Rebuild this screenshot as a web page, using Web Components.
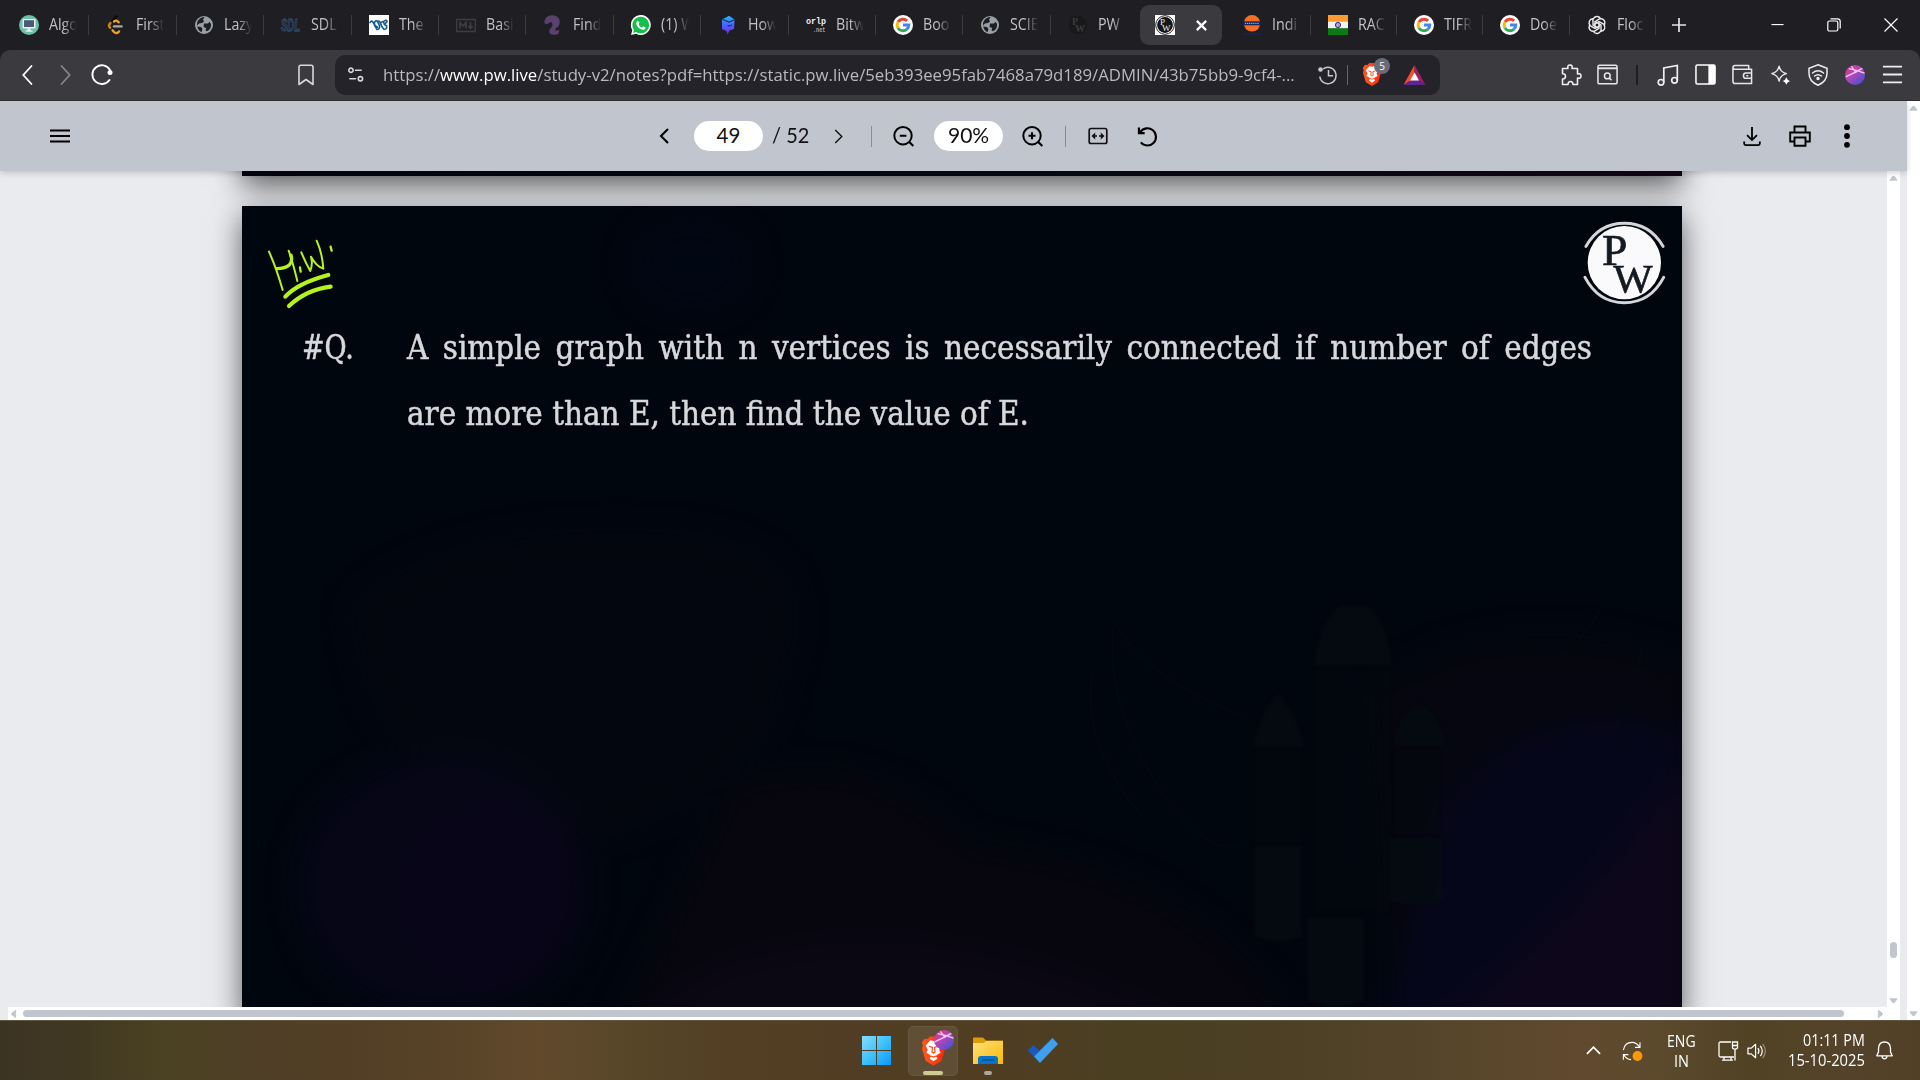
<!DOCTYPE html>
<html lang="en">
<head>
<meta charset="utf-8">
<title>Notes viewer</title>
<style>
html,body{margin:0;width:1920px;height:1080px;overflow:hidden;background:#1f1e23;font-family:"Open Sans","Noto Sans",sans-serif}
</style>
</head>
<body>
<desktop-screen></desktop-screen>
<script>
const G = {
algo:`<svg viewBox="0 0 20 20"><circle cx="10" cy="10" r="10" fill="#6cc0a8"/><rect x="3.5" y="4" width="13" height="9.5" rx="1" fill="#eee"/><rect x="5" y="5.2" width="10" height="6.8" fill="#4a5a78"/><path d="M8.5 13.5h3v2h2v1.2h-7v-1.2h2z" fill="#eee"/></svg>`,
leet:`<svg viewBox="0 0 20 20" fill="none" stroke-linecap="round" stroke-width="2.4"><path d="M10.500 1.500 4 8.300" stroke="#0a0a0a"/><path d="M4.500 7.800Q1.800 10.300 4 12.800" stroke="#c98416"/><path d="M6.500 15.300l1.500 1.700Q10.500 19.500 13 16.500" stroke="#f0a01e"/><path d="M8 6.500Q10.500 4.500 12.700 7.300" stroke="#f0a01e"/><path d="M8 11.400h7.500" stroke="#a9a9a9"/></svg>`,
globe:`<svg viewBox="0 0 20 20"><circle cx="10" cy="10" r="9" fill="#9aa0a6"/><path d="M10.500 2.500 9 4.500 10 6.500 8 8 5 8.500 3 10.500Q2.500 6 6 3.500T10.500 2.500Z" fill="#1f1e23"/><path d="M10 8.500h4l1.500-1.700 1.500 2.200q.6 5-4 7.200l-1.500-.8.700-2.500-2.700-1z" fill="#1f1e23"/><path d="M3.200 11.500 7 12l1.500 2-1 3.200Q4 15.500 3.200 11.500Z" fill="#1f1e23"/></svg>`,
sdl:`<svg viewBox="0 0 20 20"><text x="0" y="15.700" font-family="Liberation Sans" font-weight="700" font-size="16.500" font-style="italic" textLength="19" lengthAdjust="spacingAndGlyphs" fill="#12294a" stroke="#42566f" stroke-width=".8">SDL</text></svg>`,
w3:`<svg viewBox="0 0 20 20"><path d="M0 0h20v20H0z" fill="#fff"/><path d="M1 7.500Q3 4.500 4.500 8T8 14.500Q11 14.500 10.500 11L9.500 8.500Q7.500 4 5.800 6.800T8.500 12.300M8.500 6.500Q10.500 5 11.500 8.500T15 14.500Q18.500 14 17.500 10.800L15.500 9.500 18 6.500Q17.500 4.500 15.500 5.800M12.500 7.500Q14.500 5 15 8.500" fill="none" stroke="#155a94" stroke-width="1.600" stroke-linecap="round"/></svg>`,
md:`<svg viewBox="0 0 20 20" fill="none" stroke="#3e3d42" stroke-width="1.300"><path d="M.700 4.500h18.600v12H.700z"/><path d="M4 13.500v-6l3 3.500 3-3.500v6M14.500 7v6m-2.300-2 2.300 2.500 2.300-2.500" stroke-width="1.700"/></svg>`,
find:`<svg viewBox="0 0 20 20"><path d="M1.500 8.500Q1 2 7 .500q7.500-1 9.500 4.500 1 5.500-3 7.800-2 1.200-1 2.700l4-.3-1 3.300q-2 2-8 .8-3-3.300 1-7.100 2-2 .500-4Q8.500 6 6.500 7.800T1.500 8.500Z" fill="#5b4170"/></svg>`,
wa:`<svg viewBox="0 0 20 20"><path d="M0 20 1.300 15.200A10 10 0 1 1 5 18.700z" fill="#fff"/><path d="M2 18 3 14.900a8.300 8.300 0 1 1 2.200 2.100z" fill="#12bf4b"/><path d="M6.800 5.500 8.500 8 7.700 9.400q1 2.200 3.300 3.200l1.300-1.300 2.500 1.300q-.5 2.400-3 2.200-5.500-1-6.700-6.300.2-2.200 1.700-3Z" fill="#fff"/></svg>`,
how:`<svg viewBox="0 0 20 20"><defs><linearGradient id="h" x2="0" y2="1"><stop stop-color="#22b4ff"/><stop offset=".55" stop-color="#4f5cff"/><stop offset="1" stop-color="#7b25e8"/></linearGradient></defs><path d="M4 4.500 11 .800 16.500 4.500 16 14l-4.500 1.500L9.500 19.500 8.500 16 4 14Z" fill="url(#h)"/><path d="M4.500 4.500 11 7 16.500 4.700M9.500 11.200l4.500-1.200" stroke="#1d2b6e" stroke-width="1.200" fill="none"/></svg>`,
orlp:`<svg viewBox="0 0 20 20" font-family="Liberation Mono" font-weight="700" fill="#eee"><text x="0" y="9" font-size="8.500" textLength="20" lengthAdjust="spacingAndGlyphs">orlp</text><text x="7" y="17" font-size="6.500" textLength="12.500" lengthAdjust="spacingAndGlyphs" fill="#aaa">.net</text></svg>`,
google:`<svg viewBox="0 0 20 20"><circle cx="10" cy="10" r="10" fill="#fff"/><g fill="none" stroke-width="2.900"><path d="M14.100 5.900A5.800 5.800 0 0 0 5 7.100" stroke="#ea4335"/><path d="M5 7.100a5.800 5.800 0 0 0 0 5.800" stroke="#fbbc05"/><path d="M5 12.900a5.800 5.800 0 0 0 8.700 1.500" stroke="#34a853"/><path d="M13.700 14.400A5.800 5.800 0 0 0 15.800 10H10" stroke="#4285f4"/></g></svg>`,
pwdim:`<svg viewBox="0 0 20 20"><circle cx="10" cy="10" r="9.500" fill="#19191b"/><g font-family="Liberation Serif" font-weight="700" fill="#3b3a3c"><text x="4" y="10" font-size="10">P</text><text x="7" y="16.500" font-size="10">W</text></g></svg>`,
pw:`<svg viewBox="0 0 20 20"><path d="M0 0h20v20H0z" fill="#fff"/><circle cx="10" cy="10" r="9.300" fill="none" stroke="#222" stroke-width="1"/><circle cx="10" cy="10" r="7.900" fill="#161616"/><g font-family="Liberation Serif" fill="#eee"><text x="5" y="10" font-size="9">P</text><text x="7" y="16" font-size="9">W</text></g></svg>`,
indian:`<svg viewBox="0 0 20 20"><circle cx="10" cy="8.300" r="8.300" fill="#f37022"/><path d="M.5 6.300h19v4H.5z" fill="#17245c"/><path d="M3 8.300h14" stroke="#9aa" stroke-dasharray="1.200 .7" stroke-width="1.200"/><path d="M0 19h20" stroke="#17245c" stroke-width="1.500"/></svg>`,
flag:`<svg viewBox="0 0 20 20"><path d="M0 0h20v7H0z" fill="#ff9a2e"/><path d="M0 6.700h20v6.900H0z" fill="#f1f1ef"/><path d="M0 13.300h20V20H0z" fill="#0b7a12"/><circle cx="10" cy="10" r="2.600" fill="#a6a9d2" stroke="#2b2f86"/></svg>`,
gpt:`<svg viewBox="-10 -10 20 20" fill="none" stroke="#eee" stroke-width="1.400">${[0,60,120,180,240,300].map(a=>`<path transform="rotate(${a})" d="M-3.800-5.600A4 4 0 0 1 3.400-6.700L-2-3.400V2.500"/>`).join('')}</svg>`,
plus:`<svg viewBox="0 0 14 14" stroke="#e4e4e6" stroke-width="1.700"><path d="M7 0v14M0 7h14"/></svg>`,
x:`<svg viewBox="0 0 14 14" stroke="#fff" stroke-width="1.200"><path d="M.5.500l13 13m0-13-13 13"/></svg>`,
xb:`<svg viewBox="0 0 14 14" stroke="#fff" stroke-width="2.400"><path d="M2 2l10 10m0-10L2 12"/></svg>`,
min:`<svg viewBox="0 0 14 14" stroke="#fff" stroke-width="1.200"><path d="M.5 6h13"/></svg>`,
restore:`<svg viewBox="0 0 14 14" stroke="#fff" fill="none" stroke-width="1.200"><rect x=".8" y="3" width="10" height="10" rx="1.500"/><path d="M3.500.800H10.500Q13.200.800 13.200 3.500v7"/></svg>`,
back:`<svg viewBox="0 0 20 20" fill="none" stroke="#fff" stroke-width="1.800" stroke-linecap="round"><path d="M14.500 1 6.300 10 14.500 19"/></svg>`,
fwd:`<svg viewBox="0 0 20 20" fill="none" stroke="#85848a" stroke-width="1.800" stroke-linecap="round"><path d="M6.500 1 14.700 10 6.500 19"/></svg>`,
reload:`<svg viewBox="0 0 22 22" fill="none" stroke="#fff" stroke-width="1.900" stroke-linecap="round"><path d="M18.500 16A9.400 9.400 0 1 1 19 6"/><circle cx="19" cy="8.500" r="2.500" fill="#fff" stroke="none"/></svg>`,
bookmark:`<svg viewBox="0 0 22 22" fill="none" stroke="#d8d8db" stroke-width="1.600" stroke-linejoin="round"><path d="M4 20.500V3Q4 1.200 5.800 1.200h10.400Q18 1.200 18 3v17.500L11 15.500z"/></svg>`,
tune:`<svg viewBox="0 0 18 18" fill="none" stroke="#d8d8db" stroke-width="1.700" stroke-linecap="round"><circle cx="4.200" cy="4.500" r="2.300"/><path d="M9 4.500h6M3 13.500h6"/><circle cx="14.200" cy="13.500" r="2.300"/></svg>`,
history:`<svg viewBox="0 0 20 20" fill="none" stroke="#c9c9cd" stroke-width="1.500"><path d="M5 4A8.200 8.200 0 1 1 1.800 11.500M10.500 5v5.700H15"/><circle cx="2.500" cy="4.500" r="2.300" fill="#c9c9cd" stroke="none"/></svg>`,
brave:`<svg viewBox="0 0 24 28"><defs><linearGradient id="b"><stop stop-color="#ff5a1e"/><stop offset="1" stop-color="#ff2a06"/></linearGradient></defs><path d="M6.500 2.500 8.500 0h7l2 2.500 3-.3 2.700 4-1 2.300.8 3.500-3.500 11.500L12 28l-7.500-4.500L1 12l.8-3.500-1-2.300 2.700-4z" fill="url(#b)"/><path d="m12 4.500 3-.8 4.500 5-2 4 1.300 3-3.300 1.800-1.300 1.500 1.600 2.300-3.800 2.600-3.800-2.600 1.600-2.300-1.300-1.500-3.300-1.800 1.300-3-2-4 4.500-5z" fill="#fff"/><path d="m7.500 9.500 3.500 1-.5 4.500 1.500 1 1.500-1-.5-4.500 3.500-1M9.500 18.800l2.500 1 2.500-1" fill="none" stroke="#ff4516" stroke-width="1.100"/></svg>`,
tri:`<svg viewBox="0 0 22 20"><path d="M11 0 0 20 11 13z" fill="#ff4a28"/><path d="M11 0 22 20 11 13z" fill="#9c1f63"/><path d="M0 20h22L11 13z" fill="#5c2594"/><path d="M11 7.500 6.500 15.500h9z" fill="#fff"/></svg>`,
ext:`<svg viewBox="0 0 22 22" fill="none" stroke="#eee" stroke-width="1.600" stroke-linejoin="round"><path d="M2.500 4.500H8Q7 1 10 1t2 3.500h5.500V10q3.500-1 3.500 2t-3.500 2v6.500H13Q13 17.500 10.500 17.500T8 20.500H2.500V15Q5.500 15 5.500 12.300T2.500 9.800z"/></svg>`,
reader:`<svg viewBox="0 0 22 22" fill="none" stroke="#e6e6e8" stroke-width="1.600"><rect x="1" y="1.300" width="20" height="19.500" rx="1.500"/><path d="M1 4.500h20" stroke-width="2"/><circle cx="10.800" cy="12.500" r="3"/><path d="m13 14.800 2.200 2.200"/></svg>`,
music:`<svg viewBox="0 0 22 22" fill="none" stroke="#eee" stroke-width="1.700"><circle cx="4" cy="18.300" r="2.800"/><circle cx="17.500" cy="16.300" r="2.800"/><path d="M6.800 18.300V4L20.300 1.500v14.800"/></svg>`,
side:`<svg viewBox="0 0 22 22"><rect x="1" y="1" width="20" height="20" rx="1.500" fill="none" stroke="#fff" stroke-width="1.600"/><path d="M14 1h7v20h-7z" fill="#fff"/></svg>`,
wallet:`<svg viewBox="0 0 22 22" fill="none" stroke="#e6e6e8" stroke-width="1.600" stroke-linejoin="round"><path d="M17.500 5V1.500H3Q1 1.500 1 4v14q0 2.500 2.500 2.500h17V5.500H3Q1 5.500 1 4M20.500 9.500h-6q-2.500 0-2.500 2.700t2.500 2.800h6M15 12.300h2"/></svg>`,
spark:`<svg viewBox="0 0 22 22"><path d="M10 1.200q1 6.300 8 8.300-7 2-8 8.300-1-6.300-8-8.300 7-2 8-8.300Z" fill="none" stroke="#eee" stroke-width="1.500" stroke-linejoin="round"/><path d="M18 13.500q.7 3 4 4-3.300 1-4 4.200-.7-3.200-4-4.200 3.300-1 4-4Z" fill="#fff"/></svg>`,
vpn:`<svg viewBox="0 0 22 22" fill="none" stroke="#eee" stroke-width="1.500" stroke-linecap="round"><path d="m11 .800 9 3.500v5Q20 17.500 11 21.300 2 17.500 2 9.300v-5z"/><path d="M5.500 9q5.500-4.500 11 0M7.500 12q3.500-2.700 7 0"/><circle cx="11" cy="14.500" r="1" fill="#eee"/></svg>`,
ball:`<svg viewBox="0 0 22 22"><defs><linearGradient id="o" x1="0" y1="0" x2=".9" y2="1"><stop stop-color="#d9367a"/><stop offset=".45" stop-color="#b546b8"/><stop offset="1" stop-color="#3b52d8"/></linearGradient></defs><circle cx="11" cy="11" r="11" fill="url(#o)"/><path d="M.800 13Q8 10 19 3.800M4 4q8 1.500 17.500 5M7 1.500l5.500 7" stroke="#f7c6ee" stroke-width="1.500" fill="none"/></svg>`,
menu:`<svg viewBox="0 0 22 22" stroke="#eee" stroke-width="1.900"><path d="M1 2.800h20M1 11h20M1 19.200h20"/></svg>`,
pmenu:`<svg viewBox="0 0 20 16" stroke="#000" stroke-width="2"><path d="M0 2.500h20M0 8h20M0 13.500h20"/></svg>`,
prev:`<svg viewBox="0 0 16 16" fill="none" stroke="#000" stroke-width="2.100"><path d="M12 1 5 8l7 7"/></svg>`,
next:`<svg viewBox="0 0 16 16" fill="none" stroke="#111" stroke-width="1.500"><path d="M4.500 1l7 7-7 7"/></svg>`,
zout:`<svg viewBox="0 0 21 21" fill="none" stroke="#000" stroke-width="2"><circle cx="10" cy="9.700" r="8.700"/><path d="M16 15.800l4.300 4.300M6.800 9.700h6.600" stroke-width="2.100"/></svg>`,
zin:`<svg viewBox="0 0 21 21" fill="none" stroke="#000" stroke-width="2"><circle cx="10" cy="9.700" r="8.700"/><path d="M16 15.800l4.300 4.300M6.500 9.700h7M10 6.200v7" stroke-width="2.100"/></svg>`,
fit:`<svg viewBox="0 0 20 20" fill="none" stroke="#111" stroke-width="1.700"><rect x="1.200" y="2.500" width="17.600" height="15" rx="1.800"/><path d="M5 10h4m2 0h4"/><path d="M3.500 10l3.700-3.500v7zM16.500 10l-3.700-3.500v7z" fill="#111" stroke="none"/></svg>`,
rot:`<svg viewBox="0 0 22 22" fill="none" stroke="#000" stroke-width="2.200"><path d="M3.500 6.200A9 9 0 1 1 4 17.200"/><path d="M2 1.500v6h6" /></svg>`,
down:`<svg viewBox="0 0 20 22" fill="none" stroke="#000" stroke-width="2"><path d="M10 .5v14M4.500 9.500 10 15l5.500-5.500M1.300 16.500v2.300q0 1.700 1.700 1.700h14q1.700 0 1.700-1.700v-2.300"/></svg>`,
print:`<svg viewBox="0 0 22 22" fill="none" stroke="#000" stroke-width="1.900"><path d="M5.500 7V1.500h11V7M5.500 16.500H1.200V7.500h19.600v9h-4.300M5.500 12.500h11v8.300h-11z"/></svg>`,
dots:`<svg viewBox="0 0 6 24"><circle cx="3" cy="3.200" r="2.900"/><circle cx="3" cy="12" r="2.900"/><circle cx="3" cy="20.800" r="2.900"/></svg>`,
win:`<svg viewBox="0 0 29 29"><defs><linearGradient id="w" gradientUnits="userSpaceOnUse" x1="0" y1="0" x2="29" y2="29"><stop stop-color="#86dcff"/><stop offset=".5" stop-color="#3fc2fb"/><stop offset="1" stop-color="#0a98fa"/></linearGradient></defs><path d="M0 0h14v14H0zM15 0h14v14H15zM0 15h14v14H0zM15 15h14v14H15z" fill="url(#w)"/></svg>`,
folder:`<svg viewBox="0 0 30 27"><defs><linearGradient id="f" x2="1" y2="1"><stop stop-color="#ffe07c"/><stop offset="1" stop-color="#fcb904"/></linearGradient></defs><path d="M0 1.500Q0 .500 1 .500h8.500q1 0 2 1.500l1.500 1.500H30V10H0z" fill="#dc9a08"/><path d="M0 6h11l2-2h17v23H0z" fill="url(#f)"/><path d="M5 27v-5q0-3 3-3h14q3 0 3 3v5z" fill="#0873c8"/><path d="M9 23h12" stroke="#0a4f92" stroke-width="1.300"/></svg>`,
todo:`<svg viewBox="0 0 30 25"><path d="M0 12.500 5.500 7l6 6-5.500 5.800z" fill="#1d59bb"/><path d="M6 18.500 24.500 0 30 6 12 25z" fill="#3d9fee"/></svg>`,
up:`<svg viewBox="0 0 16 16" fill="none" stroke="#fff" stroke-width="1.900"><path d="M1 11.500 8 4.500l7 7"/></svg>`,
sync:`<svg viewBox="0 0 22 22" fill="none" stroke="#fff" stroke-width="1.200"><path d="M1.500 10Q3 1.500 11 1.500q5 0 8.300 5M19.800 1.500v5.500h-5.500M10 20.500q-5.500-.5-8-5.500M1.500 20.500V15H7"/><circle cx="17" cy="16.500" r="5.400" fill="#ff9707" stroke="none"/></svg>`,
net:`<svg viewBox="0 0 20 20" fill="none" stroke="#fff" stroke-width="1.300"><path d="M13 1H2.500Q1 1 1 2.500v12Q1 16 2.500 16H16M6 16v3m7-3v3M4 19.200h11"/><path d="M14.500 1h5v6q-2.500 2.500-5 0zM14.500 4.500h5M17 8.500V19.500"/></svg>`,
vol:`<svg viewBox="0 0 21 18" fill="none" stroke="#fff" stroke-width="1.300" stroke-linejoin="round"><path d="M1 6h3.500L9 2v14l-4.500-4H1z"/><path d="M11.500 6q2 3 0 6M14 3.500q4 5.500 0 11"/><path d="M16.500 1.500q5.500 7.500 0 15" stroke="#9a8c75"/></svg>`,
bell:`<svg viewBox="0 0 17 19" fill="none" stroke="#fff" stroke-width="1.300" stroke-linejoin="round"><path d="M2.500 7.500Q2.800 1 8.500 1t6 6.500V11l1.700 3.800H.800L2.500 11zM6 15.300q.5 2.500 2.500 2.500t2.500-2.500"/></svg>`,
};
const make = (tag, html, after) => customElements.define(tag, class extends HTMLElement {
  connectedCallback(){
    if(!this.shadowRoot){ this.attachShadow({mode:'open'}).innerHTML = typeof html==='function' ? html(this) : html; }
    if(after){ after(this); addEventListener('load',()=>after(this)); }
  }
});
/* inline icon: name, s = width in px, h = height */
make('i-con', e=>{const s=e.getAttribute('s')||20,h=e.getAttribute('h')||s;return `<style>:host{display:block;flex:none;width:${s}px;height:${h}px}svg{display:block;width:100%;height:100%;overflow:visible}</style>${G[e.getAttribute('n')]}`});
/* centring cell of a fixed width */
make('c-ell', e=>`<style>:host{display:flex;flex:none;align-items:center;justify-content:center;width:${e.getAttribute('w')}px;position:relative}</style><slot></slot>`);
/* vertical rule with its own cell */
make('v-rule', e=>`<style>:host{display:flex;flex:none;align-items:center;justify-content:center;width:${e.getAttribute('w')}px}i{width:${e.getAttribute('t')||1}px;height:${e.getAttribute('h')||20}px;background:${e.getAttribute('c')}}</style><i></i>`);
/* text condensed or stretched to the width w */
make('fit-text', e=>`<style>:host{display:block;flex:none;width:${e.getAttribute('w')}px;white-space:nowrap;text-align:left}span{display:inline-block;transform-origin:0 50%}</style><span><slot></slot></span>`,
 e=>{const s=e.shadowRoot.querySelector('span');const n=s.offsetWidth;if(n)s.style.transform=`scaleX(${e.getAttribute('w')/n})`;});

make('browser-tab', e=>`<style>
:host{display:flex;flex:none;box-sizing:border-box;width:${e.getAttribute('w')||87.4}px;height:20px;align-items:center;padding-left:17px;border-right:1px solid #3c3b41}
.l{margin-left:10px;width:28px;overflow:hidden;white-space:nowrap;font-size:15.500px;line-height:20px;height:22px;margin-top:-1px;color:#c3c2c7;-webkit-mask:linear-gradient(90deg,#000 50%,transparent 100%)}
.l span{display:inline-block;transform:scaleX(.92);transform-origin:0 50%}</style>
<i-con n="${e.getAttribute('n')}"></i-con><div class="l"><span><slot></slot></span></div>`);

make('tab-strip', `<style>
:host{display:flex;height:50px;background:#1f1e23;align-items:center;padding-left:2px;box-sizing:border-box;flex:none;padding-bottom:0}
.a{flex:none;width:82px;height:40px;background:#3b3a3f;border-radius:9px;margin:0 3px 0 1.500px;display:flex;align-items:center;box-sizing:border-box;padding-left:15px;gap:20px}
.g{flex:1}</style>
<browser-tab n="algo">Algo</browser-tab><browser-tab n="leet">First</browser-tab><browser-tab n="globe">Lazy</browser-tab><browser-tab n="sdl">SDL</browser-tab><browser-tab n="w3">The</browser-tab><browser-tab n="md">Basi</browser-tab><browser-tab n="find">Find</browser-tab><browser-tab n="wa">(1) W</browser-tab><browser-tab n="how">How</browser-tab><browser-tab n="orlp">Bitw</browser-tab><browser-tab n="google">Boo</browser-tab><browser-tab n="globe">SCIE</browser-tab><browser-tab n="pwdim" style="border-color:transparent">PW</browser-tab>
<div class="a"><i-con n="pw"></i-con><i-con n="xb" s="13"></i-con></div>
<browser-tab w="86.3" n="indian">Indi</browser-tab><browser-tab w="86.3" n="flag">RAC</browser-tab><browser-tab w="86.3" n="google">TIFR</browser-tab><browser-tab w="86.3" n="google">Doe</browser-tab><browser-tab w="86.3" n="gpt">Floc</browser-tab>
<c-ell w="46"><i-con n="plus" s="14"></i-con></c-ell><div class="g"></div>
<c-ell w="56"><i-con n="min" s="13"></i-con></c-ell><c-ell w="57"><i-con n="restore" s="14"></i-con></c-ell><c-ell w="58"><i-con n="x" s="14"></i-con></c-ell>`);

make('nav-bar', `<style>
:host{display:flex;height:51px;flex:none;background:#3b3a3f;border-radius:10px 10px 0 0;align-items:center;box-sizing:border-box;padding:0 9px 1px 8px;border-bottom:1px solid #302f34}
.u{display:flex;align-items:center;width:1105px;height:40px;border-radius:10px;background:#242329;margin-left:11px;font-size:17px;color:#b9b9be;box-sizing:border-box}
.u b{font-weight:400;color:#fff}.g1{width:168px}.g{flex:1}
.n{position:absolute;left:26px;top:-5px;width:16px;height:16px;border-radius:8px;background:#696b78;color:#fff;font-size:10px;line-height:16px;text-align:center}
fit-text{margin:-1px 13px 0 8px}</style>
<c-ell w="38"><i-con n="back"></i-con></c-ell><c-ell w="38"><i-con n="fwd"></i-con></c-ell><c-ell w="36"><i-con n="reload" s="22"></i-con></c-ell><div class="g1"></div>
<c-ell w="36"><i-con n="bookmark" s="22"></i-con></c-ell>
<div class="u"><c-ell w="40"><i-con n="tune" s="17"></i-con></c-ell><fit-text w="912">https://<b>www.pw.live</b>/study-v2/notes?pdf=https://static.pw.live/5eb393ee95fab7468a79d189/ADMIN/43b75bb9-9cf4-...</fit-text><c-ell w="39"><i-con n="history"></i-con></c-ell><v-rule w="1" c="#66656b"></v-rule><c-ell w="48"><i-con n="brave" s="20" h="23"></i-con><div class="n">5</div></c-ell><c-ell w="36"><i-con n="tri" s="23" h="20"></i-con></c-ell></div>
<div class="g"></div>
<c-ell w="36"><i-con n="ext" s="22"></i-con></c-ell><c-ell w="36"><i-con n="reader" s="21"></i-con></c-ell><v-rule w="24" t="2" c="#1e1d21"></v-rule><c-ell w="38"><i-con n="music" s="22"></i-con></c-ell><c-ell w="36"><i-con n="side" s="21"></i-con></c-ell><c-ell w="38"><i-con n="wallet" s="21"></i-con></c-ell><c-ell w="38"><i-con n="spark" s="20"></i-con></c-ell><c-ell w="38"><i-con n="vpn" s="22"></i-con></c-ell><c-ell w="36"><i-con n="ball" s="20"></i-con></c-ell><c-ell w="38"><i-con n="menu" s="21"></i-con></c-ell>`);

make('pdf-bar', `<style>
:host{display:flex;flex:none;height:70px;background:#c1c5cd;align-items:center;font:20.500px/28px Lato,"Open Sans",sans-serif;color:#111;position:relative;z-index:2;box-shadow:0 2px 6px rgba(0,0,0,.18)}
.in{flex:none;width:69px;height:30px;border-radius:15px;background:#fff;display:flex;justify-content:center}
.m1{width:524px;flex:none}.s{width:9px;flex:none}.g{flex:1}.o{margin-top:-2px}</style>
<c-ell w="120"><i-con n="pmenu" s="20" h="16"></i-con></c-ell><div class="m1"></div>
<c-ell w="40"><i-con n="prev" s="16"></i-con></c-ell><div class="s"></div><div class="in" style="margin-left:1px"><fit-text w="24">49</fit-text></div><div class="s"></div><fit-text class="o" w="37">/ 52</fit-text><div class="s" style="width:8px"></div><c-ell w="42"><i-con n="next" s="15"></i-con></c-ell><v-rule w="24" h="21" c="#8b8e95" t="1"></v-rule><c-ell w="40"><i-con n="zout" s="21"></i-con></c-ell><div class="s"></div><div class="in" style="margin-left:2px"><fit-text w="41">90%</fit-text></div><div class="s"></div><c-ell w="40"><i-con n="zin" s="21"></i-con></c-ell><v-rule w="26" h="21" c="#85888f" t="1"></v-rule><c-ell w="40"><i-con n="fit" s="20"></i-con></c-ell><div class="s"></div><c-ell w="40"><i-con n="rot" s="21"></i-con></c-ell><div class="g"></div>
<c-ell w="48"><i-con n="down" s="18" h="21"></i-con></c-ell><c-ell w="48"><i-con n="print" s="22"></i-con></c-ell><c-ell w="46"><i-con n="dots" s="6" h="24"></i-con></c-ell><div style="width:37px;flex:none"></div>`);

make('hw-mark', `<style>:host{display:block;width:73.300px;height:73.300px}svg{display:block;width:100%;height:100%}</style>
<svg viewBox="790 430 220 220" fill="none" stroke="#b4f41c" stroke-linecap="round" stroke-linejoin="round"><path d="M808 471Q830 520 849 586M905 473Q918 505 932 529 940 508 934 486 950 515 971 522 968 475 951 438M867 468Q880 505 893 559" stroke-width="6"/><path d="M901 518l2 13M993 456l3 12" stroke-width="7"/><path d="M831 522Q885 520 874 482" stroke-width="10"/><path d="M857 606Q895 565 986 541M868 634Q920 585 993 576" stroke-width="12.500"/></svg>`);

make('pw-logo', `<style>:host{display:block;width:90px;height:90px}svg{display:block;width:100%;height:100%;filter:blur(.5px)}</style>
<svg viewBox="180 370 270 270"><circle cx="313" cy="501" r="110" fill="#fafafc"/><path d="M198 452Q237 383 313 383T429 452M195 545Q235 621 313 621T431 545" fill="none" stroke="#d3d6da" stroke-width="9" stroke-linecap="round"/><g font-family="Liberation Serif" fill="#141a22" stroke="#141a22" stroke-width="2"><text x="246" y="508" font-size="132" textLength="76" lengthAdjust="spacingAndGlyphs">P</text><text x="280" y="588" font-size="122" textLength="118" lengthAdjust="spacingAndGlyphs">W</text></g></svg>`);

make('question-text', `<style>
:host{display:flex;font:34px/66px "DejaVu Serif Condensed","DejaVu Serif",serif;font-stretch:condensed;color:#d6d9dc;-webkit-text-stroke:.5px #d6d9dc;filter:blur(.5px)}
.q{width:104.500px;flex:none}.b{flex:none;width:1185px}.in{transform-origin:0 0;white-space:nowrap}.j{text-align:justify;text-align-last:justify}.m{display:inline-block}</style>
<div class="q"><fit-text w="52">#Q.</fit-text></div>
<div class="b"><div class="in"><div class="j">A simple graph with n vertices is necessarily connected if number of edges</div><span class="m">are more than E, then find the value of E.</span></div></div>`,
 e=>{const r=e.shadowRoot,k=622/r.querySelector('.m').offsetWidth,i=r.querySelector('.in');i.style.transform=`scaleX(${k})`;i.style.width=1185/k+'px';});

make('note-page', `<style>
:host{display:block;position:relative;width:1440px;height:810px;flex:none;background:#00060e;box-shadow:0 10px 28px rgba(0,0,0,.6)}
.art{position:absolute;inset:0;width:1440px;height:810px}
.top{display:flex;justify-content:space-between;padding:32px 12px 0 21px;position:relative}
pw-logo{margin-top:-19.500px}question-text{margin:2.500px 0 0 60px}</style>
<svg class="art" viewBox="0 0 1440 810"><defs><filter id="s" x="-30%" y="-30%" width="160%" height="160%" color-interpolation-filters="sRGB"><feGaussianBlur stdDeviation="14"/></filter><filter id="t" color-interpolation-filters="sRGB"><feGaussianBlur stdDeviation="1.500"/></filter><clipPath id="c"><path d="M0 0h1440v810H0z"/></clipPath></defs><g clip-path="url(#c)"><g filter="url(#s)"><path d="M110 400Q200 320 400 325T540 470Q530 560 440 600T300 640Q120 560 110 400Z" fill="#04060f"/><ellipse cx="200" cy="680" rx="145" ry="130" fill="#060617"/><ellipse cx="250" cy="690" rx="90" ry="90" fill="#090518"/><path d="M370 830 490 580Q620 530 730 640 960 660 1060 830Z" fill="#07060f"/><path d="M370 830 480 760Q700 690 960 830Z" fill="#0b0713"/><path d="M1130 480Q1280 390 1450 460V830H1150L1140 700Z" fill="#05060f"/><path d="M1140 830 1200 600Q1300 480 1450 530V830Z" fill="#06061a"/><path d="M1180 830Q1330 730 1450 550V830Z" fill="#0e071b"/><ellipse cx="450" cy="60" rx="60" ry="45" fill="#010613"/></g>
<g filter="url(#t)" fill="#050b12"><path d="M1073 455Q1078 415 1098 400h28q18 15 24 55v4h-77zM1013 535q6-30 23-48 18 22 25 48v6h-48zM1153 536q4-30 24-37 18 7 26 37v3h-50zM1013 640h46v90q-22 10-46 0zM1148 632h53v62q-28 8-53 0zM1066 712h56v82q-28 14-56 0z" opacity=".8"/><path d="M1073 465h75v240h-75zM1013 546h46v90h-46zM1153 546h44v80h-44z" opacity=".3"/></g>
<g fill="none" stroke="#070d14" stroke-width="1.200" opacity=".7"><path d="M872 415Q862 490 910 570T1000 640M872 415Q900 470 1000 510M850 470Q840 540 900 610M1400 440Q1390 530 1310 600T1210 650M1360 400Q1330 460 1220 520M1376 480V560"/></g></g></svg>
<div class="top"><hw-mark></hw-mark><pw-logo></pw-logo></div><question-text></question-text>`);

make('scroll-bar', e=>{const v=e.hasAttribute('v'),a=e.getAttribute('at'),l=e.getAttribute('len');const A=(d)=>`<svg viewBox="0 0 10 6"><path d="${d}" fill="#c1c5cd" stroke="#c1c5cd" stroke-linejoin="round"/></svg>`;
return `<style>:host{display:flex;flex:none;background:#fff;box-sizing:border-box;align-items:center;justify-content:space-between;${v?'width:13px;flex-direction:column;padding:4px 0 3px':'height:13px;padding:0 4px 0 2px'}}
svg{width:9px;height:6px;flex:none;${v?'':'transform:rotate(-90deg);margin:0 -1.500px'}}i{flex:none;border-radius:4px;background:#c1c5cd;${v?`width:7px;height:${l}px;margin-top:${a}px`:`height:7px;width:${l}px;margin-left:${a}px`}}i+svg{margin-${v?'top':'left'}:auto}</style>
${A('M1 5.500 4 1.200h2L9 5.500z')}${l?'<i></i>':''}${A('M1 .5 4 4.800h2L9 .5z')}`});

make('pdf-view', `<style>
:host{display:grid;grid-template-columns:8px 1879px 13px 7px;grid-template-rows:836px 13px;background:#eaebef;width:1907px;height:849px}
.v{grid-column:1/3;overflow:hidden;display:flex;flex-direction:column;padding-left:242px;gap:30px;height:836px;box-sizing:border-box}
.p{height:205px;margin-top:-200px;flex:none;width:1440px;background:linear-gradient(90deg,#00050e,#080a16 60%,#120618);box-shadow:0 10px 28px rgba(0,0,0,.6)}
.h{grid-column:2;grid-row:2}.c{background:#fff;grid-column:3;grid-row:2}</style>
<div class="v"><div class="p"></div><note-page></note-page></div>
<scroll-bar v at="761" len="16"></scroll-bar><scroll-bar class="h" at="7" len="1821"></scroll-bar><div class="c"></div>`);

make('task-bar', `<style>
:host{display:flex;height:60px;flex:none;box-sizing:border-box;border-top:1px solid #5f5540;align-items:center;color:#fff;font-size:15.500px;line-height:20px;
background:linear-gradient(90deg,#3c3423 0,#403722 4%,#4c4223 9%,#4e3f26 13%,#523e25 18%,#594428 24%,#62492c 28%,#594729 32%,#523f24 38%,#513d23 45%,#503d22 51%,#4b3f22 58%,#4c3f24 66%,#54452a 74%,#61492e 82%,#5d4a2d 86%,#514224 91%,#54432a 96%,#514026 100%)}
.g{width:850px;flex:none}.g2{flex:1}.box{width:50px;height:50px;border-radius:5px;background:rgba(255,255,255,.09);box-shadow:inset 0 0 0 1px rgba(255,255,255,.06);position:relative;display:flex;align-items:center;justify-content:center}
.ball{position:absolute;left:26px;top:4px}.i{position:absolute;bottom:1px;left:15px;width:20px;height:4px;border-radius:2px;background:#cfca92}.d{position:absolute;width:8px;height:4px;border-radius:2px;background:#b0a69b}
.t{display:flex;flex-direction:column;align-items:flex-end;width:88px;flex:none;margin-top:-1px}.e{display:flex;flex-direction:column;align-items:center}</style>
<div class="g"></div><c-ell w="53"><i-con n="win" s="29"></i-con></c-ell><c-ell w="60"><div class="box"><i-con n="brave" s="25" h="30"></i-con><i-con class="ball" n="ball" s="20"></i-con><div class="i"></div></div></c-ell><c-ell w="50"><i-con n="folder" s="30" h="27"></i-con><div class="d" style="left:21px;bottom:-11px"></div></c-ell><c-ell w="60"><i-con n="todo" s="30" h="25"></i-con></c-ell><div class="g2"></div>
<c-ell w="40"><i-con n="up" s="15"></i-con></c-ell><c-ell w="38"><i-con n="sync" s="20"></i-con></c-ell><c-ell w="60"><div class="e"><fit-text w="29">ENG</fit-text><fit-text w="15">IN</fit-text></div></c-ell><c-ell w="33"><i-con n="net" s="20"></i-con></c-ell><c-ell w="26"><i-con n="vol" s="20" h="18"></i-con></c-ell><div style="width:7px"></div>
<div class="t"><fit-text w="62">01:11 PM</fit-text><fit-text w="77">15-10-2025</fit-text></div><c-ell w="38"><i-con n="bell" s="17" h="19"></i-con></c-ell><div style="width:17px"></div>`);

make('desktop-screen', `<style>
:host{display:flex;flex-direction:column;width:1920px;height:1080px;overflow:hidden}
.r{display:flex;height:919px;flex:none}.l{display:flex;flex-direction:column;width:1907px}scroll-bar{height:919px}</style>
<tab-strip></tab-strip><nav-bar></nav-bar><div class="r"><div class="l"><pdf-bar></pdf-bar><pdf-view></pdf-view></div><scroll-bar v></scroll-bar></div><task-bar></task-bar>`);
</script>
</body>
</html>
